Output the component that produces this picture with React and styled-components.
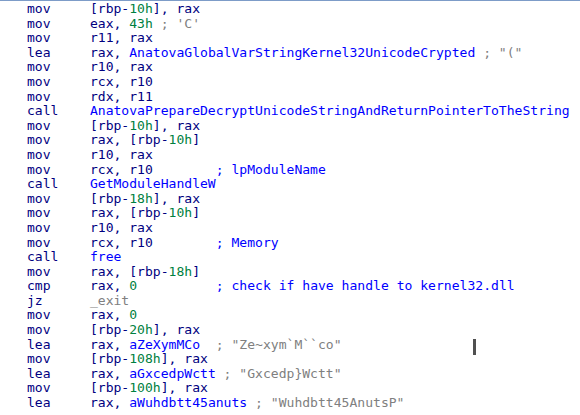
import React from 'react'
import styled, { createGlobalStyle } from 'styled-components'

const Global = createGlobalStyle`
  html, body {
    margin: 0;
    padding: 0;
    background: #ffffff;
  }
`;

const Listing = styled.div`
  position: relative;
  width: 580px;
  height: 415px;
  box-sizing: border-box;
  border-top: 1px solid #7d9cc8;
  padding: 1px 0 0 27px;
  background: #ffffff;
  font-family: "DejaVu Sans Mono", "Liberation Mono", monospace;
  font-size: 13.07px;
  overflow: hidden;
`;

const Row = styled.div`
  display: flex;
  height: 14.6px;
  line-height: 14.6px;
  white-space: pre;
`;

const Mnemonic = styled.span`
  width: 8ch;
  flex: none;
  color: #000080;
`;

const colors = {
  r: '#000080',
  n: '#008040',
  s: '#0000ff',
  c: '#808080',
  b: '#0000ff',
};

const Part = styled.span`
  color: ${props => colors[props.$kind]};
`;

const Caret = styled.div`
  position: absolute;
  left: 473px;
  top: 338px;
  width: 3px;
  height: 16px;
  background: #505050;
`;

const lines = [
  ['mov', [['r', '[rbp-'], ['n', '10h'], ['r', '], rax']]],
  ['mov', [['r', 'eax, '], ['n', '43h'], ['c', " ; 'C'"]]],
  ['mov', [['r', 'r11, rax']]],
  ['lea', [['r', 'rax, '], ['s', 'AnatovaGlobalVarStringKernel32UnicodeCrypted'], ['c', ' ; "("']]],
  ['mov', [['r', 'r10, rax']]],
  ['mov', [['r', 'rcx, r10']]],
  ['mov', [['r', 'rdx, r11']]],
  ['call', [['s', 'AnatovaPrepareDecryptUnicodeStringAndReturnPointerToTheString']]],
  ['mov', [['r', '[rbp-'], ['n', '10h'], ['r', '], rax']]],
  ['mov', [['r', 'rax, [rbp-'], ['n', '10h'], ['r', ']']]],
  ['mov', [['r', 'r10, rax']]],
  ['mov', [['r', 'rcx, r10        '], ['b', '; lpModuleName']]],
  ['call', [['s', 'GetModuleHandleW']]],
  ['mov', [['r', '[rbp-'], ['n', '18h'], ['r', '], rax']]],
  ['mov', [['r', 'rax, [rbp-'], ['n', '10h'], ['r', ']']]],
  ['mov', [['r', 'r10, rax']]],
  ['mov', [['r', 'rcx, r10        '], ['b', '; Memory']]],
  ['call', [['s', 'free']]],
  ['mov', [['r', 'rax, [rbp-'], ['n', '18h'], ['r', ']']]],
  ['cmp', [['r', 'rax, '], ['n', '0'], ['r', '          '], ['b', '; check if have handle to kernel32.dll']]],
  ['jz', [['c', '_exit']]],
  ['mov', [['r', 'rax, '], ['n', '0']]],
  ['mov', [['r', '[rbp-'], ['n', '20h'], ['r', '], rax']]],
  ['lea', [['r', 'rax, '], ['s', 'aZeXymMCo'], ['c', '  ; "Ze~xym`M``co"']]],
  ['mov', [['r', '[rbp-'], ['n', '108h'], ['r', '], rax']]],
  ['lea', [['r', 'rax, '], ['s', 'aGxcedpWctt'], ['c', ' ; "Gxcedp}Wctt"']]],
  ['mov', [['r', '[rbp-'], ['n', '100h'], ['r', '], rax']]],
  ['lea', [['r', 'rax, '], ['s', 'aWuhdbtt45anuts'], ['c', ' ; "Wuhdbtt45AnutsP"']]],
];

const App = () => {
  return (
    <>
      <Global />
      <Listing>
        {lines.map(([op, parts], i) => (
          <Row key={i}>
            <Mnemonic>{op}</Mnemonic>
            {parts.map(([kind, text], j) => (
              <Part key={j} $kind={kind}>{text}</Part>
            ))}
          </Row>
        ))}
        <Caret />
      </Listing>
    </>
  )
}

export default App
